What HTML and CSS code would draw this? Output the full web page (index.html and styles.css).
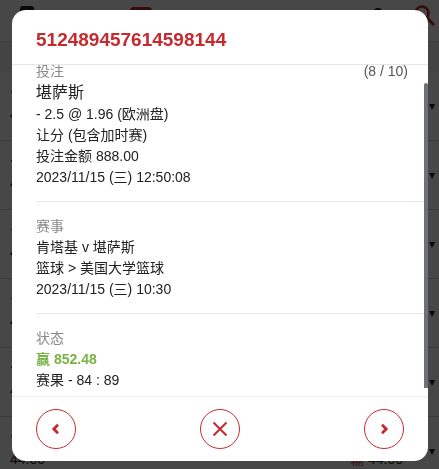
FILE: index.html
```html
<!DOCTYPE html>
<html>
<head>
    <title>注单详情</title>
    <link rel="stylesheet" href="styles.css">
</head>
<body>
    <div class="page">
        <div class="topbar">
            <span class="menu-icon"></span>
            <span class="brand"></span>
            <span class="user-icon"></span>
            <svg class="search" width="22" height="22" viewBox="0 0 22 22">
                <circle cx="9" cy="9" r="6.5" fill="none" stroke="#c62a2f" stroke-width="2.5"/>
                <line x1="14" y1="14" x2="20" y2="20" stroke="#c62a2f" stroke-width="3" stroke-linecap="round"/>
            </svg>
        </div>
        <div class="tabs"></div>
        <ul class="bets">
            <li class="bet-row"><div class="bet-main"><div>肯塔基 v 堪萨斯</div><div class="bet-amounts"><span>44.00</span><span><em>输</em> 44.00</span></div></div><span class="caret">&#9662;</span></li>
            <li class="bet-row"><div class="bet-main"><div>肯塔基 v 堪萨斯</div><div class="bet-amounts"><span>44.00</span><span><em>输</em> 44.00</span></div></div><span class="caret">&#9662;</span></li>
            <li class="bet-row"><div class="bet-main"><div>肯塔基 v 堪萨斯</div><div class="bet-amounts"><span>44.00</span><span><em>输</em> 44.00</span></div></div><span class="caret">&#9662;</span></li>
            <li class="bet-row"><div class="bet-main"><div>肯塔基 v 堪萨斯</div><div class="bet-amounts"><span>44.00</span><span><em>输</em> 44.00</span></div></div><span class="caret">&#9662;</span></li>
            <li class="bet-row"><div class="bet-main"><div>肯塔基 v 堪萨斯</div><div class="bet-amounts"><span>44.00</span><span><em>输</em> 44.00</span></div></div><span class="caret">&#9662;</span></li>
            <li class="bet-row"><div class="bet-main"><div>肯塔基 v 堪萨斯</div><div class="bet-amounts"><span>44.00</span><span><em>输</em> 44.00</span></div></div><span class="caret">&#9662;</span></li>
        </ul>
    </div>

    <div class="overlay">
        <div class="modal">
            <div class="modal-head">
                <h2 class="bet-id">512489457614598144</h2>
            </div>

            <div class="body-wrap">
                <div class="modal-body" id="detail">
                    <section class="block">
                        <div class="block-label"><span>投注</span><span class="count">(8 / 10)</span></div>
                        <div class="pick">堪萨斯</div>
                        <div class="line">- 2.5 @ 1.96 (欧洲盘)</div>
                        <div class="line">让分 (包含加时赛)</div>
                        <div class="line">投注金额 888.00</div>
                        <div class="line">2023/11/15 (三) 12:50:08</div>
                    </section>
                    <section class="block">
                        <div class="block-label"><span>赛事</span></div>
                        <div class="line">肯塔基 v 堪萨斯</div>
                        <div class="line">篮球 &gt; 美国大学篮球</div>
                        <div class="line">2023/11/15 (三) 10:30</div>
                    </section>
                    <section class="block">
                        <div class="block-label"><span>状态</span></div>
                        <div class="line win">赢 852.48</div>
                        <div class="line">赛果 - 84 : 89</div>
                    </section>
                </div>
                <div class="scroll-thumb"></div>
            </div>

            <div class="modal-foot">
                <button type="button" class="round-btn" id="prev">
                    <svg width="12" height="12" viewBox="0 0 12 12"><path d="M8 1.8 L3.8 6 L8 10.2" fill="none" stroke="#c62a2f" stroke-width="2.8"/></svg>
                </button>
                <button type="button" class="round-btn" id="close">
                    <svg width="16" height="16" viewBox="0 0 16 16"><path d="M1.5 1.5 L14.5 14.5 M14.5 1.5 L1.5 14.5" fill="none" stroke="#c62a2f" stroke-width="2"/></svg>
                </button>
                <button type="button" class="round-btn" id="next">
                    <svg width="12" height="12" viewBox="0 0 12 12"><path d="M4 1.8 L8.2 6 L4 10.2" fill="none" stroke="#c62a2f" stroke-width="2.8"/></svg>
                </button>
            </div>
        </div>
    </div>

    <script>
        document.getElementById("detail").scrollTop = 18;
    </script>
</body>
</html>
```

FILE: styles.css
```css
/* Base page */
body {
    margin: 0;
    font-family: "Liberation Sans", Arial, "Noto Sans CJK SC", sans-serif;
    color: #222;
    background-color: #f2f2f2;
}

/* Page behind the dialog */
.topbar {
    height: 41px;
    background-color: #fff;
    border-bottom: 1px solid #d8d8d8;
    display: flex;
    align-items: flex-start;
    padding: 0 0 0 20px;
}

.menu-icon {
    width: 14px;
    height: 18px;
    margin-top: 6px;
    background-color: #222;
    border-radius: 3px;
}

.brand {
    width: 22px;
    height: 30px;
    margin: 7px 0 0 96px;
    background-color: #c62a2f;
    border-radius: 4px;
}

.user-icon {
    width: 10px;
    height: 20px;
    margin: 8px 0 0 221px;
    background-color: #222;
    border-radius: 5px;
}

.search {
    margin: 4px 0 0 30px;
}

.tabs {
    height: 30px;
}

.bets {
    list-style: none;
    margin: 0;
    padding: 0;
}

.bet-row {
    display: flex;
    height: 69px;
    background-color: #fff;
    border-bottom: 1px solid #d8d8d8;
    padding: 12px 4px 0 10px;
    box-sizing: border-box;
    font-size: 14px;
    line-height: 20px;
}

.bet-main {
    flex: 1;
}

.bet-amounts {
    display: flex;
    justify-content: space-between;
    padding-right: 26px;
}

.bet-amounts em {
    font-style: normal;
    color: #c62a2f;
}

.caret {
    margin-top: 12px;
    font-size: 12px;
}

/* Dim layer and dialog */
.overlay {
    position: fixed;
    top: 0;
    left: 0;
    right: 0;
    bottom: 0;
    background-color: rgba(0, 0, 0, 0.72);
    display: flex;
    align-items: flex-start;
    justify-content: center;
    padding-top: 10px;
}

.modal {
    width: 416px;
    margin-left: 1px;
    background-color: #fff;
    border-radius: 14px;
    overflow: hidden;
}

.modal-head {
    padding: 18px 24px 12px;
    border-bottom: 1px solid #e6e6e6;
}

.bet-id {
    margin: 0;
    font-size: 19px;
    line-height: 24px;
    font-weight: bold;
    color: #c62a2f;
}

.body-wrap {
    position: relative;
}

.modal-body {
    height: 331px;
    overflow: hidden;
}

/* thin scrollbar thumb drawn over the right edge */
.scroll-thumb {
    position: absolute;
    top: 18px;
    right: 0;
    width: 4px;
    height: 305px;
    background-color: #6c707a;
    border-radius: 2px 2px 0 0;
}

/* Detail blocks */
.block {
    margin: 0 4px 0 24px;
    padding: 14px 16px 13px 0;
    border-bottom: 1px solid #e8e8e8;
}

.block:last-child {
    border-bottom: none;
}

.block-label {
    display: flex;
    justify-content: space-between;
    font-size: 14px;
    line-height: 21px;
    color: #8a8a8a;
}

.count {
    color: #555;
}

.pick {
    font-size: 16px;
    line-height: 22px;
    color: #222;
}

.line {
    font-size: 14px;
    line-height: 21px;
}

.win {
    color: #79b345;
    font-weight: bold;
}

/* Footer buttons */
.modal-foot {
    display: flex;
    justify-content: space-between;
    padding: 12px 24px;
    border-top: 1px solid #eeeeee;
}

.round-btn {
    width: 40px;
    height: 40px;
    padding: 0;
    border: 1px solid #c62a2f;
    border-radius: 50%;
    background-color: #fff;
    display: flex;
    align-items: center;
    justify-content: center;
    cursor: pointer;
}
```
